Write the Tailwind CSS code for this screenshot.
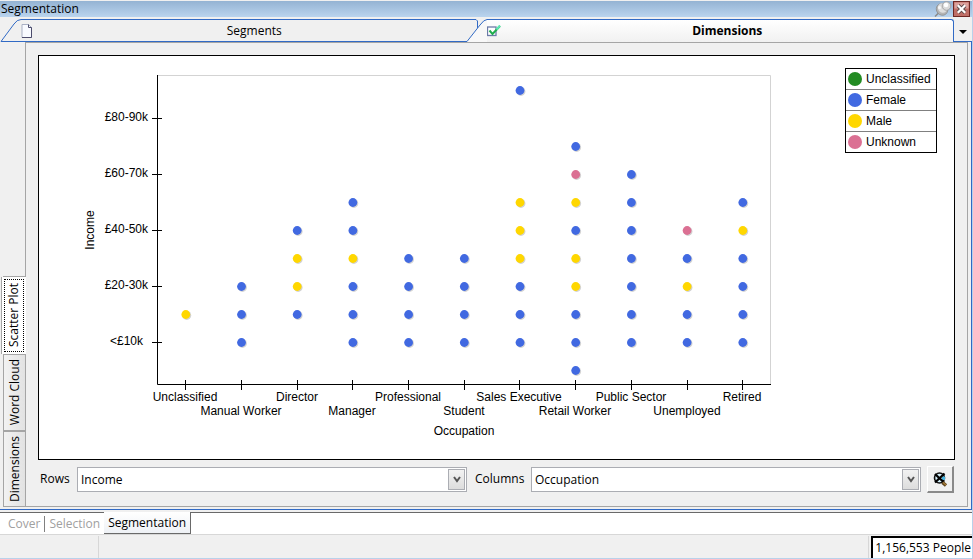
<!DOCTYPE html>
<html lang="en">
<head>
  <meta charset="UTF-8">
  <meta name="viewport" content="width=device-width, initial-scale=1.0">
  <title>Segmentation</title>
  <!-- Tailwind CSS CDN -->
  <script src="https://cdn.jsdelivr.net/npm/@tailwindcss/browser@4"></script>
</head>
<body class="flex min-h-screen flex-col border-r border-b border-[#b9d1ea] bg-[#f0f0f0] font-['Open_Sans',sans-serif] text-xs text-black">

<!-- Title bar -->
<header class="mt-px flex h-4 items-center justify-between bg-linear-to-b from-[#94b3d3] to-[#bad4ee] pr-px pl-px">
  <h1>Segmentation</h1>
  <div class="flex items-center gap-px">
    <button type="button" aria-label="Pin">
      <svg class="h-4 w-[18px]" viewBox="0 0 18 16" aria-hidden="true">
        <path d="M1 15.500 6 10.500" stroke="#8a8a8a" stroke-width="1.500"/>
        <ellipse cx="8" cy="8.500" rx="5.500" ry="6" fill="#b4b4b4" stroke="#8f8f8f" stroke-width=".8" transform="rotate(-40 8 8.500)"/>
        <ellipse cx="8.500" cy="7" rx="4.500" ry="5" fill="#dedede" transform="rotate(-40 8.500 7)"/>
        <circle cx="12.500" cy="5" r="4.300" fill="#dadada" stroke="#9a9a9a" stroke-width=".8"/>
        <circle cx="12" cy="4" r="2.300" fill="#fff"/>
        <circle cx="5.500" cy="6.500" r="1.500" fill="#f8f8f8"/>
      </svg>
    </button>
    <button type="button" aria-label="Close">
      <svg class="h-4 w-[18px]" viewBox="0 0 18 16" aria-hidden="true">
        <rect x=".5" y=".5" width="16" height="15" fill="#bf6e67" stroke="#6d2723"/>
        <rect x="1.500" y="1.500" width="14" height="6" fill="#dba19c"/>
        <path d="m5 4.500 7 7m0-7-7 7" stroke="#5b4a4a" stroke-width="4"/>
        <path d="m4.800 4.300 7.400 7.400m0-7.400-7.400 7.400" stroke="#fff" stroke-width="2.300"/>
      </svg>
    </button>
  </div>
</header>

<!-- Document tabs -->
<nav class="flex h-[25px] items-stretch pt-0.5" aria-label="Views">
  <button type="button" class="flex flex-[467] items-stretch">
    <svg class="h-[23px] w-[21px] shrink-0" viewBox="0 0 21 23" aria-hidden="true">
      <path d="M1 22.500 14 5Q17 .5 21 .5" fill="none" stroke="#316ac5"/>
      <path d="M1 22.500h20" stroke="#316ac5"/>
    </svg>
    <span class="flex flex-1 items-center border-y border-[#316ac5]">
      <svg class="h-3.5 w-3" viewBox="0 0 12 14" aria-hidden="true">
        <path d="M1 .5h6.500l3 3v10H1z" fill="#f8faff" stroke="#a9b0c4"/>
        <path d="M7.500.5v3h3v10H1" fill="none" stroke="#4c4c6c"/>
      </svg>
      <span class="flex-1 pl-2">Segments</span>
    </span>
  </button>
  <button type="button" class="flex flex-[486] items-stretch font-bold">
    <svg class="h-[23px] w-5 shrink-0" viewBox="0 0 20 23" aria-hidden="true">
      <path d="M0 .5h9l1.500 1.500v7" fill="none" stroke="#316ac5"/>
      <path d="M0 22.500 13 6Q17 .5 20 .5V23H0z" fill="#f8f8f8"/>
      <path d="M0 22.500 13 6Q17 .5 20 .5" fill="none" stroke="#316ac5"/>
    </svg>
    <span class="flex flex-1 items-center rounded-tr-[3px] border-t border-r border-[#316ac5] bg-linear-to-b from-white to-[#f1f1f1]">
      <svg class="h-3 w-3.5" viewBox="0 0 14 12" aria-hidden="true">
        <rect x=".5" y="2" width="8.500" height="8.500" fill="#fff" stroke="#6b7ba8" stroke-width="1.300"/>
        <path d="m2.500 5.500 3 3.500L13 1" fill="none" stroke="#1fae4e" stroke-width="2"/>
        <path d="m9.500 4.500 3.500-4" stroke="#5fe8b4" stroke-width="2"/>
      </svg>
      <span class="flex-1">Dimensions</span>
    </span>
  </button>
  <button type="button" aria-label="Tab list" class="flex w-[18px] items-center justify-center border-b border-[#316ac5]">
    <svg class="mt-1 h-1 w-2" viewBox="0 0 8 4" aria-hidden="true"><path d="M0 0h8L4 4z"/></svg>
  </button>
</nav>

<main class="flex flex-1 border-r border-b border-[#316ac5] pr-[3px] pb-0.5">
  <!-- Side tabs -->
  <div class="flex w-[25px] shrink-0 flex-col" role="tablist" aria-orientation="vertical">
    <div class="ml-[3px] flex-1 border-b border-[#a5a5a5]"></div>
    <button type="button" role="tab" aria-selected="true" class="relative -mr-px ml-px h-[77px] border-l border-[#a5a5a5] bg-white p-0.5">
      <span class="flex h-full items-center justify-center border border-dotted border-black">
        <span class="rotate-180 [writing-mode:vertical-rl]">Scatter Plot</span>
      </span>
    </button>
    <button type="button" role="tab" class="ml-[3px] flex h-[77px] items-center justify-center border border-r-0 border-[#a5a5a5] bg-linear-to-r from-[#f2f2f2] to-[#e2e2e2]">
      <span class="rotate-180 [writing-mode:vertical-rl]">Word Cloud</span>
    </button>
    <button type="button" role="tab" class="ml-[3px] flex h-[76px] items-center justify-center border border-r-0 border-[#a5a5a5] bg-linear-to-r from-[#f2f2f2] to-[#e2e2e2]">
      <span class="rotate-180 [writing-mode:vertical-rl]">Dimensions</span>
    </button>
  </div>

  <section class="flex flex-1 flex-col gap-1.5 border border-[#a5a5a5] px-3 pt-3 pb-[13px]">
    <!-- Scatter plot -->
    <div class="relative flex-1 border border-black bg-white">
      <svg id="chart" class="w-full font-['Liberation_Sans',Arial,sans-serif] text-xs" viewBox="0 0 915 403" role="img" aria-label="Income by occupation">
        <path d="M118 19.500h613.500V328" fill="none" stroke="#d3d3d3"/>
        <path d="M118.500 19v309.500H732" fill="none" stroke="#000"/>
        <text x="425" y="379" text-anchor="middle">Occupation</text>
        <text transform="translate(55 174) rotate(-90)" text-anchor="middle">Income</text>
      </svg>
      <ul class="absolute top-3 right-[17px] w-[92px] divide-y divide-[#808080] border border-black bg-white font-['Liberation_Sans',Arial,sans-serif]">
        <li class="flex h-[21px] items-center gap-1 pl-0.5"><span class="size-3.5 rounded-full bg-[#228b22]"></span>Unclassified</li>
        <li class="flex h-[21px] items-center gap-1 pl-0.5"><span class="size-3.5 rounded-full bg-[#4169e1]"></span>Female</li>
        <li class="flex h-[21px] items-center gap-1 pl-0.5"><span class="size-3.5 rounded-full bg-[#ffd700]"></span>Male</li>
        <li class="flex h-5 items-center gap-1 pl-0.5"><span class="size-3.5 rounded-full bg-[#db7093]"></span>Unknown</li>
      </ul>
    </div>

    <!-- Axis pickers -->
    <form class="flex h-[27px] items-center pr-px">
      <label for="rows" class="w-[39px] pb-0.5 pl-0.5">Rows</label>
      <div class="relative flex-1">
        <select id="rows" class="h-[25px] w-full appearance-none border border-[#abadb3] bg-white pl-[3px]">
          <option>Income</option>
          <option>Occupation</option>
        </select>
        <span class="pointer-events-none absolute inset-y-0.5 right-0.5 flex w-[17px] items-center justify-center border border-[#abadb3] bg-linear-to-b from-[#f2f2f2] to-[#dddddd]">
          <svg class="h-[7px] w-2" viewBox="0 0 8 7" aria-hidden="true"><path d="m1 1 3 4 3-4" fill="none" stroke="#555" stroke-width="2"/></svg>
        </span>
      </div>
      <label for="columns" class="w-16 pb-0.5 pl-2">Columns</label>
      <div class="relative flex-1">
        <select id="columns" class="h-[25px] w-full appearance-none border border-[#abadb3] bg-white pl-[3px]">
          <option>Occupation</option>
          <option>Income</option>
        </select>
        <span class="pointer-events-none absolute inset-y-0.5 right-0.5 flex w-[17px] items-center justify-center border border-[#abadb3] bg-linear-to-b from-[#f2f2f2] to-[#dddddd]">
          <svg class="h-[7px] w-2" viewBox="0 0 8 7" aria-hidden="true"><path d="m1 1 3 4 3-4" fill="none" stroke="#555" stroke-width="2"/></svg>
        </span>
      </div>
      <button type="button" aria-label="Reset zoom" class="ml-1.5 flex size-[27px] items-center justify-center border-t border-r-2 border-b-2 border-l border-t-white border-r-[#8a8a8a] border-b-[#8a8a8a] border-l-white">
        <svg class="size-[15px]" viewBox="0 0 15 15" aria-hidden="true">
          <circle cx="6.500" cy="6" r="5" fill="#d5f1fb" stroke="#111" stroke-width="1.600"/>
          <path d="M9 4.500h3V8H9z" fill="#46b4e0"/>
          <path d="m2 2 9 8.500M11.500 1.500 2 10.500" stroke="#000" stroke-width="2.300"/>
          <path d="m9.500 10.500 3.500 3" stroke="#5d431c" stroke-width="3.500"/>
          <path d="m10 10.500 3 2.500" stroke="#a67c38" stroke-width="1.500"/>
        </svg>
      </button>
    </form>
  </section>
</main>

<!-- Page tabs -->
<nav class="mt-0.5 flex h-[22px] items-stretch bg-white" aria-label="Pages">
  <div class="flex items-center border-t border-[#696969] pl-2 text-[#a0a0a0]">
    <button type="button" class="border-r border-[#808080] pr-1">Cover</button>
    <button type="button" class="px-1">Selection</button>
  </div>
  <button type="button" class="border-r border-b border-[#696969] bg-linear-to-b from-white to-[#eef1f5] px-1">Segmentation</button>
  <div class="flex-1 border-t border-[#696969]"></div>
</nav>

<!-- Status bar -->
<footer class="flex h-6 items-stretch justify-between border-t border-[#d7d7d7] pt-px">
  <div class="w-[99px] border-r border-[#d7d7d7]"></div>
  <div class="flex border-l border-[#d7d7d7] pl-0.5">
    <output class="flex items-center border-t-2 border-l-2 border-black bg-white pr-px pl-0.5">1,156,553 People</output>
  </div>
</footer>

<script>
  const COLORS = {F: '#4169e1', M: '#ffd700', U: '#db7093'};

  // One string per occupation, read upwards from the income level in `from`
  const OCCUPATIONS = [
    {name: 'Unclassified', from: 1, dots: 'M'},
    {name: 'Manual Worker', from: 0, dots: 'FFF'},
    {name: 'Director', from: 1, dots: 'FMMF'},
    {name: 'Manager', from: 0, dots: 'FFFMFF'},
    {name: 'Professional', from: 0, dots: 'FFFF'},
    {name: 'Student', from: 0, dots: 'FFFF'},
    {name: 'Sales Executive', from: 0, dots: 'FFFMMM   F'},
    {name: 'Retail Worker', from: -1, dots: 'FFFMMFMUF'},
    {name: 'Public Sector', from: 0, dots: 'FFFFFFF'},
    {name: 'Unemployed', from: 0, dots: 'FFMFU'},
    {name: 'Retired', from: 0, dots: 'FFFFMF'}
  ];
  const INCOMES = ['<£10k', '£20-30k', '£40-50k', '£60-70k', '£80-90k'];

  const chart = document.getElementById('chart');

  function add(tag, attrs, text) {
    const el = document.createElementNS('http://www.w3.org/2000/svg', tag);
    for (const key in attrs) el.setAttribute(key, attrs[key]);
    if (text) el.textContent = text;
    chart.appendChild(el);
  }

  INCOMES.forEach((label, i) => {
    const y = 286 - i * 56;
    add('path', {d: `M113 ${y + 0.5}h10`, stroke: '#000'});
    add('text', {x: i === 0 ? 104 : 109, y: y + 3, 'text-anchor': 'end'}, label);
  });

  OCCUPATIONS.forEach((item, i) => {
    const x = 147 + i * 55.7;
    const tick = Math.round(x - 0.8) + 0.5;
    add('path', {d: `M${tick} 324v10`, stroke: '#000'});
    add('text', {x: tick - 0.5, y: i % 2 ? 359 : 345, 'text-anchor': 'middle'}, item.name);
    [...item.dots].forEach((dot, j) => {
      if (dot === ' ') return;
      const y = 286.5 - (item.from + j) * 28;
      add('circle', {cx: x + 0.7, cy: y + 0.9, r: 4.5, fill: '#d3d3d3'});
      add('circle', {cx: x - 0.2, cy: y, r: 4.4, fill: COLORS[dot]});
    });
  });
</script>
</body>
</html>
